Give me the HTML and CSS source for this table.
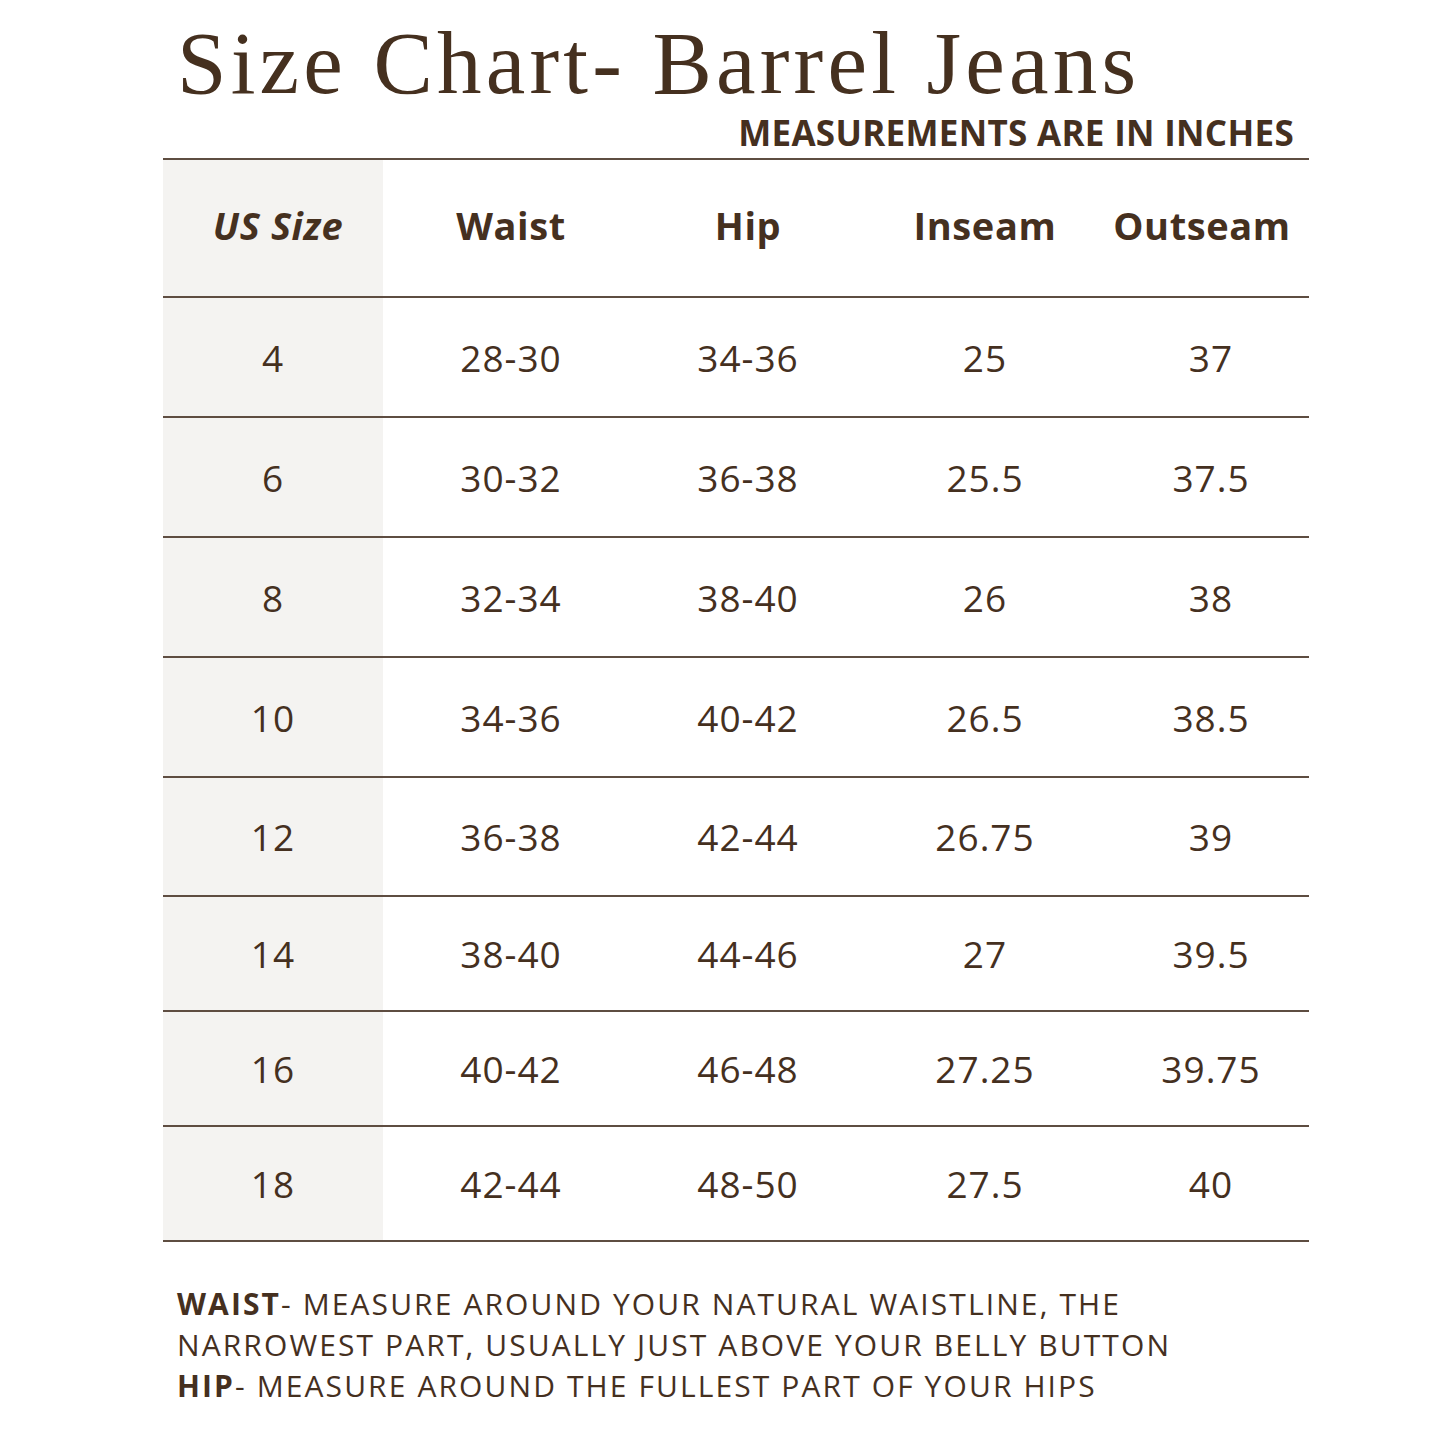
FILE: index.html
```html
<!DOCTYPE html>
<html>
<head>
<meta charset="utf-8">
<link rel="stylesheet" href="styles.css">
</head>
<body>
<div class="page">
  <h1 class="title">Size Chart- Barrel Jeans</h1>
  <div class="subtitle">MEASUREMENTS ARE IN INCHES</div>
  <div class="chart">
    <div class="row head">
      <div class="cell first"><em>US Size</em></div>
      <div class="cell">Waist</div>
      <div class="cell">Hip</div>
      <div class="cell">Inseam</div>
      <div class="cell last">Outseam</div>
    </div>
    <div class="row"><div class="cell first">4</div><div class="cell">28-30</div><div class="cell">34-36</div><div class="cell">25</div><div class="cell">37</div></div>
    <div class="row"><div class="cell first">6</div><div class="cell">30-32</div><div class="cell">36-38</div><div class="cell">25.5</div><div class="cell">37.5</div></div>
    <div class="row"><div class="cell first">8</div><div class="cell">32-34</div><div class="cell">38-40</div><div class="cell">26</div><div class="cell">38</div></div>
    <div class="row"><div class="cell first">10</div><div class="cell">34-36</div><div class="cell">40-42</div><div class="cell">26.5</div><div class="cell">38.5</div></div>
    <div class="row tight"><div class="cell first">12</div><div class="cell">36-38</div><div class="cell">42-44</div><div class="cell">26.75</div><div class="cell">39</div></div>
    <div class="row short"><div class="cell first">14</div><div class="cell">38-40</div><div class="cell">44-46</div><div class="cell">27</div><div class="cell">39.5</div></div>
    <div class="row short"><div class="cell first">16</div><div class="cell">40-42</div><div class="cell">46-48</div><div class="cell">27.25</div><div class="cell">39.75</div></div>
    <div class="row short"><div class="cell first">18</div><div class="cell">42-44</div><div class="cell">48-50</div><div class="cell">27.5</div><div class="cell">40</div></div>
  </div>
  <div class="notes">
    <p><strong>WAIST</strong>- MEASURE AROUND YOUR NATURAL WAISTLINE, THE<br>NARROWEST PART, USUALLY JUST ABOVE YOUR BELLY BUTTON</p>
    <p><strong>HIP</strong>- MEASURE AROUND THE FULLEST PART OF YOUR HIPS</p>
  </div>
</div>
</body>
</html>
```

FILE: styles.css
```css
* { box-sizing: border-box; }
html, body { margin: 0; padding: 0; background: #ffffff; }
body {
  color: #45301f;
  font-family: "Open Sans", "Noto Sans", sans-serif;
}
.page {
  width: 1146px;
  margin-left: 163px;
  padding-top: 13px;
}
.title {
  margin: 0 0 0 14px;
  font-family: "Liberation Serif", serif;
  font-weight: 400;
  font-size: 89px;
  line-height: 100px;
  letter-spacing: 4.2px;
  white-space: nowrap;
}
.subtitle {
  text-align: right;
  padding-right: 15px;
  font-weight: 700;
  font-size: 35px;
  line-height: 40px;
  letter-spacing: 0.3px;
  height: 45px;
}
.chart {
  border-top: 2px solid #5e4d41;
}
.row {
  display: grid;
  grid-template-columns: 220px 256px 218px 256px 196px;
  height: 120px;
  border-bottom: 2px solid #5e4d41;
  font-size: 37px;
  letter-spacing: 1px;
}
.row.head {
  height: 138px;
  font-weight: 700;
  font-size: 38px;
  letter-spacing: 0.6px;
}
.row.head .cell { padding-bottom: 6px; }
.row.tight { height: 119px; }
.row.short { height: 115px; }
.cell {
  display: flex;
  align-items: center;
  justify-content: center;
}
.cell.first { background: #f4f3f1; }
.row.head .cell.first { padding-left: 10px; }
.row.head .cell.last { padding-right: 18px; }
.notes {
  margin-top: 41px;
  padding-left: 14px;
  font-size: 30px;
  line-height: 41px;
  letter-spacing: 2.1px;
  white-space: nowrap;
}
.notes p { margin: 0; }
.notes strong { font-weight: 700; }
```
